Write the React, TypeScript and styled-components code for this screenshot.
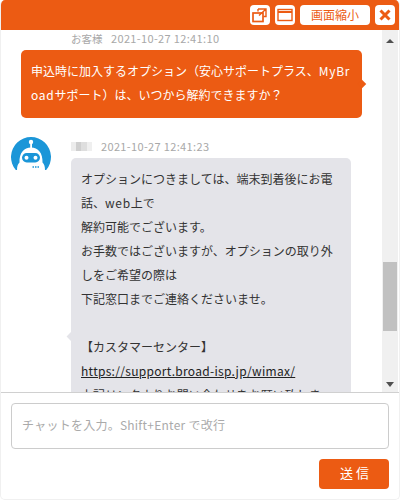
import React from "react";
import styled, { createGlobalStyle } from "styled-components";

const orange = "#ec5b13";
const fontStack = '"Noto Sans CJK JP", "Noto Sans", sans-serif';

const Global = createGlobalStyle`
  html, body { margin: 0; padding: 0; background: #fff; }
  * { box-sizing: border-box; }
`;

const Chat = styled.div`
  width: 400px;
  height: 500px;
  display: flex;
  flex-direction: column;
  font-family: ${fontStack};
  border: 1px solid #f0f0f0;
  border-top: 0;
  border-radius: 5px;
  overflow: hidden;
  background: #fff;
  color: #333;
`;

const Header = styled.header`
  height: 30px;
  margin: 0 -1px;
  flex: none;
  background: ${orange};
  display: flex;
  justify-content: flex-end;
  align-items: center;
  gap: 5px;
  padding: 0 5px 0 0;
`;

const HeadButton = styled.button<{ $wide?: boolean }>`
  width: ${(p) => (p.$wide ? "70px" : "20px")};
  height: 20px;
  border: 0;
  border-radius: 4px;
  background: #fff;
  padding: 0;
  display: flex;
  align-items: center;
  justify-content: center;
  color: ${orange};
  font-family: ${fontStack};
  font-size: 12px;
  line-height: 20px;
`;

const Middle = styled.div`
  height: 362px;
  flex: none;
  display: flex;
`;

const Messages = styled.div`
  flex: 1;
  min-width: 0;
  overflow: hidden;
`;

const Meta = styled.div<{ $indent: number }>`
  display: flex;
  align-items: center;
  height: 16px;
  padding-left: ${(p) => p.$indent}px;
  font-size: 10.5px;
  color: #a8a8a8;
`;

const Name = styled.span`
  width: 40px;
`;

const Stamp = styled.span`
  font-size: 11px;
  letter-spacing: 0.35px;
`;

const Blur = styled.span`
  width: 21px;
  height: 9px;
  margin-right: 9px;
  background: linear-gradient(90deg, #ececec 0 25%, #cfcfcf 25% 50%, #dedede 50% 75%, #efefef 75%);
  filter: blur(0.6px);
`;

const Bubble = styled.div`
  position: relative;
  font-size: 12px;
  line-height: 24px;
  word-break: break-all;
  border-radius: 5px;
`;

const Latin = styled.span`
  letter-spacing: 0.7px;
`;

const CustomerBubble = styled(Bubble)`
  width: 341px;
  margin: 4px 0 0 20px;
  padding: 9px 10px 11px;
  color: #fff;
  background: ${orange};
  &::after {
    content: "";
    position: absolute;
    right: -3px;
    top: 31px;
    width: 6px;
    height: 6px;
    background: ${orange};
    transform: rotate(45deg);
  }
`;

const Bot = styled.section`
  display: flex;
  margin-top: 17px;
`;

const Avatar = styled.svg`
  width: 42px;
  height: 33px;
  flex: none;
  margin: 2px 0 0 9px;
`;

const BotBody = styled.div`
  margin-left: 19px;
  padding-top: 3px;
`;

const BotBubble = styled(Bubble)`
  width: 280px;
  margin-top: 4px;
  padding: 9px 10px 0;
  background: #e4e4e9;
  &::before {
    content: "";
    position: absolute;
    left: -3px;
    top: 175px;
    width: 7px;
    height: 7px;
    background: #e4e4e9;
    transform: rotate(45deg);
  }
`;

const Link = styled.a`
  color: #222;
  text-decoration: underline;
  letter-spacing: 0.3px;
`;

const ScrollTrack = styled.div`
  width: 16px;
  margin-right: 1px;
  flex: none;
  background: #f0f0f0;
  display: flex;
  flex-direction: column;
  align-items: center;
  padding: 9px 0 0;
`;

const Arrow = styled.span<{ $down?: boolean }>`
  flex: none;
  width: 0;
  height: 0;
  border-left: 4px solid transparent;
  border-right: 4px solid transparent;
  ${(p) => (p.$down ? "border-top: 5px solid #505050;" : "border-bottom: 4px solid #505050;")}
`;

const Thumb = styled.span`
  flex: none;
  width: 14px;
  height: 69px;
  margin-top: 219px;
  background: #c1c1c1;
`;

const ArrowDown = styled(Arrow)`
  margin-top: 51px;
`;

const Footer = styled.footer`
  flex: 1;
  border-top: 1px solid #d0d0d0;
  padding: 10px 10px 0;
  display: flex;
  flex-direction: column;
  align-items: flex-end;
`;

const Input = styled.textarea`
  display: block;
  width: 378px;
  height: 46px;
  resize: none;
  border: 1px solid #ccc;
  border-radius: 4px;
  padding: 13px 10px 0;
  margin: 0;
  font-family: ${fontStack};
  font-size: 12px;
  line-height: 16px;
  letter-spacing: 0.25px;
  outline: 0;
  overflow: hidden;
  &::placeholder { color: #aaa; opacity: 1; }
`;

const Send = styled.button`
  width: 70px;
  height: 30px;
  margin-top: 10px;
  border: 0;
  border-radius: 4px;
  background: ${orange};
  color: #fff;
  font-family: ${fontStack};
  font-size: 13px;
  letter-spacing: 3px;
  padding: 0 0 3px 4px;
`;

export default function App() {
  return (
    <>
      <Global />
      <Chat>
        <Header>
          <HeadButton aria-label="別窓で開く">
            <svg width="16" height="16" viewBox="0 0 16 16" fill="none" stroke={orange} strokeWidth="1.7">
              <rect x="1" y="6" width="10" height="8.5" />
              <path d="M6 2h8v7.5h-2.5M6 2v2.5M7 8.5 13.5 2.5" strokeWidth="1.4" />
            </svg>
          </HeadButton>
          <HeadButton aria-label="最大化">
            <svg width="16" height="14" viewBox="0 0 16 14" fill="none" stroke={orange}>
              <rect x="1" y="1.5" width="14" height="11" strokeWidth="1.4" />
              <path d="M1 4h14" strokeWidth="2" />
            </svg>
          </HeadButton>
          <HeadButton $wide>画面縮小</HeadButton>
          <HeadButton aria-label="閉じる">
            <svg width="12" height="12" viewBox="0 0 12 12" stroke={orange} strokeWidth="3">
              <path d="M1.5 1.5 10.5 10.5M10.5 1.5 1.5 10.5" />
            </svg>
          </HeadButton>
        </Header>
        <Middle>
          <Messages>
            <section>
              <Meta $indent={70}>
                <Name>お客様</Name>
                <Stamp>2021-10-27 12:41:10</Stamp>
              </Meta>
              <CustomerBubble>
                申込時に加入するオプション（安心サポートプラス、<Latin>MyBroad</Latin>サポート）は、いつから解約できますか？
              </CustomerBubble>
            </section>
            <Bot>
              <Avatar viewBox="0 0 42 33">
                <path d="M5.8 33A20 20 0 1 1 36.2 33Z" fill="#1b96d8" />
                <rect x="20.2" y="4" width="1.8" height="7" fill="#fff" />
                <circle cx="21" cy="5" r="2.2" fill="#fff" />
                <path d="M7 33c0-4 1-6 2.5-7.5C9 16 14 10.5 21 10.5s12 5.500 11.500 15C34 27 35 29 35 33Z" fill="#fff" />
                <rect x="12" y="16" width="18" height="9.500" rx="4.700" fill="#1b96d8" />
                <circle cx="16.500" cy="20.700" r="2" fill="#fff" />
                <circle cx="25.500" cy="20.700" r="2" fill="#fff" />
                <path d="M22.500 30h1.500M25 30h1.500M27.500 30h1.500" stroke="#1b96d8" strokeWidth="1.600" />
              </Avatar>
              <BotBody>
                <Meta $indent={0}>
                  <Blur />
                  <Stamp>2021-10-27 12:41:23</Stamp>
                </Meta>
                <BotBubble>
                  オプションにつきましては、端末到着後にお電話、<Latin>web</Latin>上で
                  <br />
                  解約可能でございます。
                  <br />
                  お手数ではございますが、オプションの取り外しをご希望の際は
                  <br />
                  下記窓口までご連絡くださいませ。
                  <br />
                  <br />
                  【カスタマーセンター】
                  <br />
                  <Link href="#">https://support.broad-isp.jp/wimax/</Link>
                  <br />
                  上記リンクよりお問い合わせをお願い致します。
                </BotBubble>
              </BotBody>
            </Bot>
          </Messages>
          <ScrollTrack>
            <Arrow />
            <Thumb />
            <ArrowDown $down />
          </ScrollTrack>
        </Middle>
        <Footer>
          <Input placeholder="チャットを入力。Shift+Enter で改行" />
          <Send>送信</Send>
        </Footer>
      </Chat>
    </>
  );
}
